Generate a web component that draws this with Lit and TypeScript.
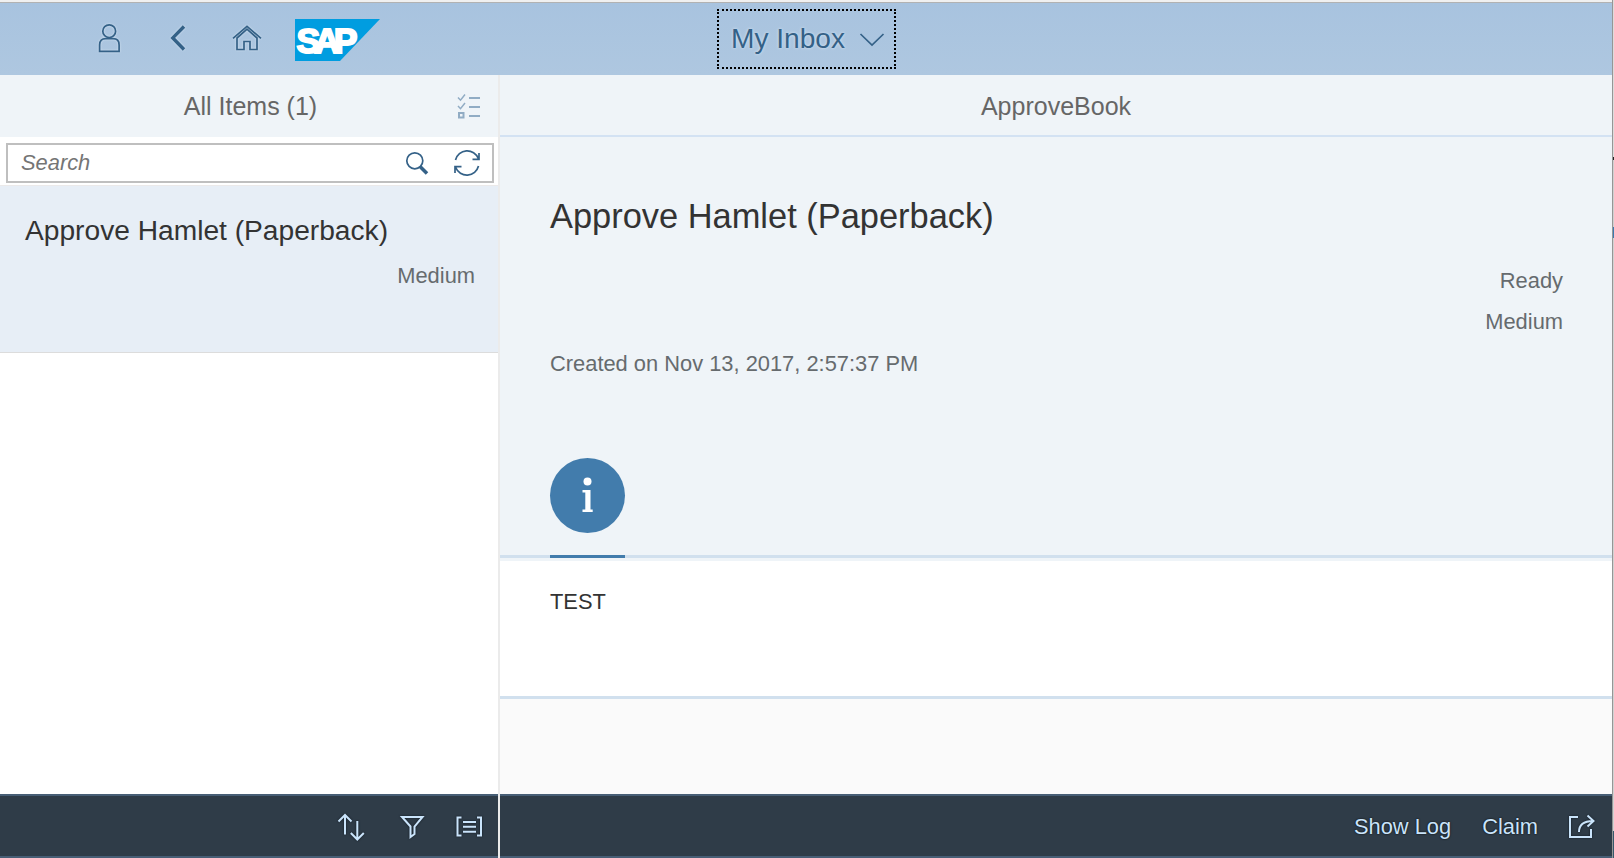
import { LitElement, html, css } from "lit";
import { customElement } from "lit/decorators.js";

@customElement("app-root")
class AppRoot extends LitElement {
  static styles = css`
    * { box-sizing: border-box; }
    :host {
      display: flex; width: 1614px; height: 858px; overflow: hidden;
      font-family: "Liberation Sans", Arial, sans-serif; font-size: 21.875px;
      color: #666b6e; background: #d6d6d6; line-height: 30px;
    }
    svg { display: block; flex: none; fill: none; stroke: #346187; stroke-width: 1.7; }
    .window { width: 1612px; display: flex; flex-direction: column; }
    .edge { width: 2px; border-left: 1px solid #969696; display: flex; flex-direction: column; }
    .edge i { display: block; width: 1px; }
    .e1 { height: 157px; background: #dcdcdc; }
    .e2 { height: 3px; background: #222; }
    .e3 { height: 67px; background: #d0d0d0; }
    .e4 { height: 11px; background: #3b7ab0; }
    .e5 { height: 593px; background: #d2d2d2; }
    .e6 { flex: 1; background: #35586b; }
    .shell {
      height: 75px; border-top: 2px solid #f0f0f0; flex: none;
      background: linear-gradient(#a8c3df, #aec7e0);
      display: grid; grid-template-columns: 717px 179px 1fr;
    }
    .tools { display: flex; align-items: center; padding: 0 0 0 94px; border-top: 1px solid #b2b2b2; }
    .mid, .rest { border-top: 1px solid #b2b2b2; }
    .tools svg { filter: drop-shadow(0 0 1px #d5e4f2); }
    .back { margin-left: 36px; }
    .home { margin-left: 37px; }
    .tools .logo { margin-left: 32px; margin-top: 2px; filter: none; }
    .word { font: 700 35.500px "Liberation Sans", Arial, sans-serif; letter-spacing: -6px; fill: #fff; stroke: #fff; stroke-width: 2; }
    .mid { display: flex; align-items: center; }
    .app {
      width: 179px; height: 60px; outline: 2px dotted #000; outline-offset: -2px;
      display: flex; align-items: center; padding-left: 14px; gap: 14px;
      font-size: 28.125px; color: #346187; text-shadow: 0 0 3px #dce9f5; white-space: nowrap;
    }
    .body { flex: 1; display: flex; min-height: 0; }
    .master { width: 500px; border-right: 2px solid #ebebeb; display: flex; flex-direction: column; background: #fff; }
    .bar { height: 62px; background: #eff4f8; font-size: 25px; color: #666; display: grid; grid-template-columns: 59px 1fr 56px; align-items: center; text-align: center; flex: none; }
    .bar svg { stroke: #91acc4; stroke-width: 2; margin-left: 15px; }
    .searchrow { height: 49px; padding: 6px 4px 0 6px; border-bottom: 1px solid #ebe9e9; flex: none; }
    .search { height: 40px; border: 2px solid #bfbfbf; display: flex; align-items: center; padding: 0 11px 0 13px; }
    .search em { flex: 1; color: #757575; line-height: 36px; }
    .refresh { margin-left: 24px; }
    .item { height: 167px; background: #e7eef6; border-bottom: 1px solid #dcdcdc; padding: 28px 23px 0 25px; flex: none; }
    .name { font-size: 28.16px; line-height: 34px; color: #333; }
    .item .prio { text-align: right; margin-top: 13px; }
    .fill { flex: 1; }
    .foot {
      height: 64px; background: #2f3c48; border-top: 2px solid #475e75; border-bottom: 2px solid #475e75;
      display: flex; align-items: center; justify-content: flex-end; color: #cae4fb; flex: none;
      text-shadow: 0 0 2px #000; line-height: 60px; padding-top: 2px;
    }
    .foot svg { stroke: #cae4fb; stroke-width: 2; filter: drop-shadow(0 0 1px #101820); }
    .master .foot { padding-right: 14px; gap: 27px; }
    .sort { margin-right: 3px; }
    .detail { flex: 1; display: flex; flex-direction: column; background: #fafafa; }
    .title { height: 62px; line-height: 63px; background: #eff4f8; border-bottom: 2px solid #d3e2f3; text-align: center; font-size: 25px; color: #666; flex: none; }
    .object { height: 418px; background: #eff4f8; padding: 58px 49px 0 50px; flex: none; }
    h1 { margin: 0; font-size: 34.42px; line-height: 42px; font-weight: 400; color: #333; }
    .status { text-align: right; margin-top: 29px; }
    .status div { height: 41px; }
    .created { margin-top: 1px; }
    .tab { width: 75px; height: 75px; border-radius: 50%; background: #427cac; margin-top: 79px; }
    .line { height: 6px; padding-left: 50px; background: linear-gradient(#d1e0ee 3px, #eff4f8 3px); flex: none; }
    .line i { display: block; width: 75px; height: 3px; background: #427cac; }
    .content { height: 138px; padding: 26px 50px; background: #fff; border-bottom: 3px solid #d1e0ee; color: #333; flex: none; }
    .detail .foot { padding-right: 14px; }
    .claim { margin: 0 28px 0 31px; }
  `;

  render() {
    return html`
      <div class="window">
        <header class="shell">
          <div class="tools">
            <svg width="32" height="32"><circle cx="15.2" cy="8.200" r="6.400"/><path d="M5.600 28.400V22c0-4.500 2.400-6.300 6-6.300h7.500c3.600 0 6 1.800 6 6.300v6.400z"/></svg>
            <svg class="back" width="32" height="32"><path stroke-width="3.4" d="M22 3.500 10.800 14.900 22 26.500"/></svg>
            <svg class="home" width="32" height="32"><path d="M2 15.400 16 3.300l14 12.100M6 26.500V15l10-8.800L26 15v11.500h-7v-8h-6v8z"/></svg>
            <svg class="logo" width="88" height="42">
              <path fill="#009de0" stroke="none" d="M0 0h85L45 42H0z"/>
              <text class="word" x="1.500" y="33.500">SAP</text>
            </svg>
          </div>
          <div class="mid"><div class="app">My Inbox
            <svg width="26" height="16"><path d="M1.500 3 13 14 24.500 3"/></svg></div></div>
          <div class="rest"></div>
        </header>
        <div class="body">
          <section class="master">
            <div class="bar"><span></span><span>All Items (1)</span>
              <svg width="24" height="26"><path stroke-width="1.500" d="M1 4.500l2.500 2.700L8 1.500M1 13l2.500 2.700L8 10"/><path d="M12 5h11M12 14h11M12 23h11M2 20h4.500v4.500H2z"/></svg>
            </div>
            <div class="searchrow"><div class="search"><em>Search</em>
              <svg width="24" height="26"><circle cx="9.800" cy="10.800" r="8"/><path stroke-width="3.600" d="M15 16.500l7 7"/></svg>
              <svg class="refresh" width="28" height="28"><path d="M2.500 11A12 12 0 0 1 25.300 9.500M25.500 17A12 12 0 0 1 2.700 18.500M26 4v6.300h-6.500M2 24v-6.300h6.500"/></svg>
            </div></div>
            <div class="item"><div class="name">Approve Hamlet (Paperback)</div><div class="prio">Medium</div></div>
            <div class="fill"></div>
            <footer class="foot">
              <svg class="sort" width="32" height="30"><path d="M10 22.500V3M3.500 9.500 10 3l6.500 6.500M22.300 9v18M15.800 21l6.500 6.500 6.500-6.500"/></svg>
              <svg width="30" height="30"><path d="M5 5h20.500l-8 9.500V22l-4 3v-10.500z"/></svg>
              <svg width="30" height="30"><path d="M7.500 5.500H3.500v18h4M23 5.500h4v18h-4M9 10h13M9 14.800h13M9 19.800h13"/></svg>
            </footer>
          </section>
          <main class="detail">
            <div class="title">ApproveBook</div>
            <div class="object">
              <h1>Approve Hamlet (Paperback)</h1>
              <div class="status"><div>Ready</div><div>Medium</div></div>
              <div class="created">Created on Nov 13, 2017, 2:57:37 PM</div>
              <div class="tab"><svg width="75" height="75"><circle cx="37.500" cy="23.500" r="4" fill="#fff" stroke="none"/><path fill="#fff" stroke="none" d="M32.500 32h8v19.500h2.200V54H32.500v-2.500h2.800V34.500h-2.800z"/></svg></div>
            </div>
            <div class="line"><i></i></div>
            <div class="content">TEST</div>
            <div class="fill"></div>
            <footer class="foot"><span>Show Log</span><span class="claim">Claim</span>
              <svg width="32" height="30"><path d="M12 5H4v20h21v-8M13 20c0-7 4-11 14-11M21.500 3.500 27.500 9l-6 5.500"/></svg>
            </footer>
          </main>
        </div>
      </div>
      <div class="edge"><i class="e1"></i><i class="e2"></i><i class="e3"></i><i class="e4"></i><i class="e5"></i><i class="e6"></i></div>
    `;
  }
}
